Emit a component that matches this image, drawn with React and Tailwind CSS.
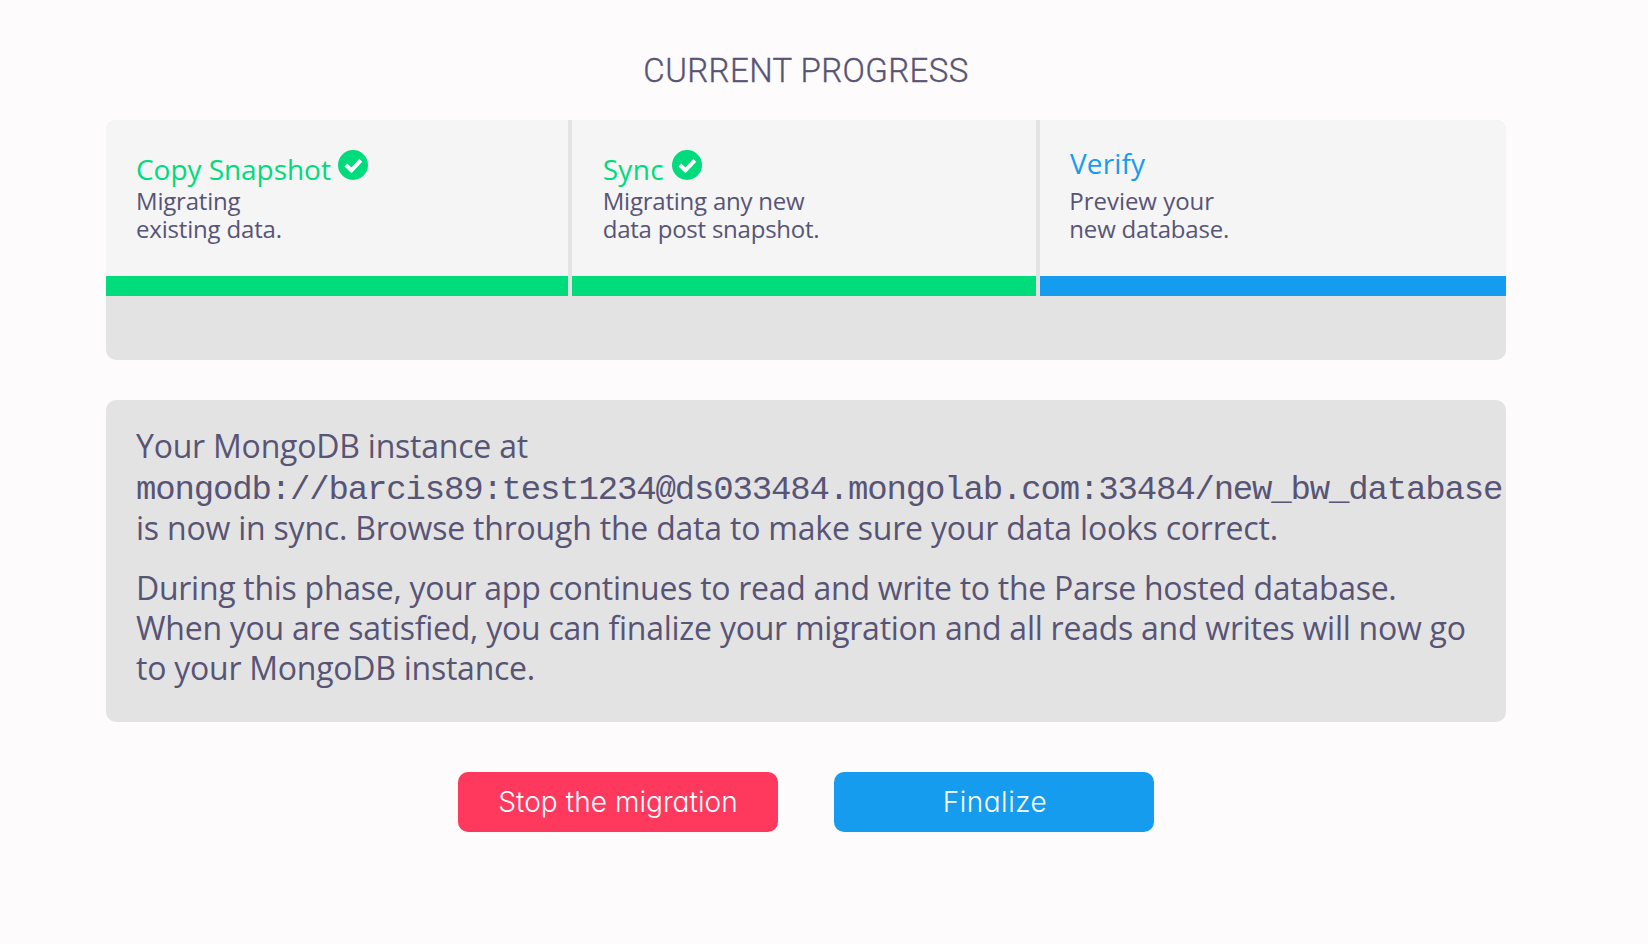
function CheckBadge() {
  return (
    <svg viewBox="0 0 30 30" className="h-[30px] w-[30px] shrink-0" aria-hidden="true">
      <circle cx="15" cy="15" r="15" fill="#00db7c" />
      <path d="M7.9 15 L13.4 20.3 L22.8 10.4" fill="none" stroke="#fff" strokeWidth="4" />
    </svg>
  );
}

function Step({ title, titleClass, lines, className, headClass, barClass, done }) {
  return (
    <div className={`flex h-[176px] flex-col bg-[#f5f5f5] ${className}`}>
      <div className={`flex h-[67px] shrink-0 items-start ${headClass}`}>
        <h2 className={`shrink-0 whitespace-nowrap text-[28px] leading-[38px] ${titleClass}`}>{title}</h2>
        {done && <CheckBadge />}
      </div>
      <div className="h-[89px] shrink-0 text-2xl leading-7">
        {lines.map(([text, tracking]) => (
          <p key={text} className={`whitespace-nowrap ${tracking}`}>{text}</p>
        ))}
      </div>
      <div className={`h-5 shrink-0 ${barClass}`} />
    </div>
  );
}

export default function App() {
  return (
    <main className="flex h-[944px] flex-col overflow-hidden bg-[#fdfbfc] pt-[51px] pl-[106px] font-['Open_Sans','Noto_Sans',sans-serif] font-[370] text-[#585475]">
      <div className="flex w-[1400px] flex-col">
        <h1 className="h-[69px] text-center font-['Roboto',sans-serif] text-[33px] font-light leading-10 tracking-[0.4px] [-webkit-text-stroke:0.35px_#585475]">
          CURRENT PROGRESS
        </h1>

        <section className="flex h-[240px] items-start gap-1 overflow-hidden rounded-[10px] bg-[#e3e3e3]">
          <Step
            title="Copy Snapshot"
            titleClass="w-[202px] text-[#00db7c] tracking-[-0.05px]"
            className="w-[462px] [&>*:not(:last-child)]:pl-[30px]"
            headClass="pt-[30px]"
            barClass="bg-[#00db7c]"
            done
            lines={[["Migrating", "tracking-[-0.2px]"], ["existing data.", "tracking-[-0.18px]"]]}
          />
          <Step
            title="Sync"
            titleClass="w-[69.3px] text-[#00db7c] tracking-[0.3px]"
            className="w-[464px] [&>*:not(:last-child)]:pl-[30.7px]"
            headClass="pt-[30px]"
            barClass="bg-[#00db7c]"
            done
            lines={[["Migrating any new", "tracking-[-0.22px]"], ["data post snapshot.", "tracking-[-0.23px]"]]}
          />
          <Step
            title="Verify"
            titleClass="text-[#169cee] tracking-[0.15px] pl-[0.7px]"
            className="w-[466px] [&>*:not(:last-child)]:pl-[29.3px]"
            headClass="pt-[24px]"
            barClass="bg-[#169cee]"
            lines={[["Preview your", "tracking-[-0.03px]"], ["new database.", "tracking-[-0.18px]"]]}
          />
        </section>

        <section className="mt-10 h-[322px] rounded-[10px] bg-[#e3e3e3] pt-[26px] pl-[30px] text-[32px] leading-10 whitespace-nowrap">
          <p className="tracking-[-0.22px]">Your MongoDB instance at</p>
          <p className="mt-[4px] h-[38px] font-['Liberation_Mono',monospace] text-[34px] font-normal tracking-[-1.16px]">
            mongodb://barcis89:test1234@ds033484.mongolab.com:33484/new_bw_database
          </p>
          <p className="tracking-[-0.21px]">
            is now in sync. Browse through the data to make sure your data looks correct.
          </p>
          <p className="mt-5 tracking-[-0.28px]">
            During this phase, your app continues to read and write to the Parse hosted database.
          </p>
          <p className="tracking-[-0.25px]">
            When you are satisfied, you can finalize your migration and all reads and writes will now go
          </p>
          <p className="tracking-[-0.25px]">to your MongoDB instance.</p>
        </section>

        <div className="mt-[50px] flex justify-center gap-14 font-['Inter',sans-serif] text-[28px] font-[330] leading-[60px] text-white [font-feature-settings:'cv11']">
          <button className="h-[60px] w-[320px] rounded-[10px] bg-[#ff395e] tracking-[0.06px]">Stop the migration</button>
          <button className="h-[60px] w-[320px] rounded-[10px] bg-[#169cee] pl-[2px] tracking-[0.5px]">Finalize</button>
        </div>
      </div>
    </main>
  );
}
